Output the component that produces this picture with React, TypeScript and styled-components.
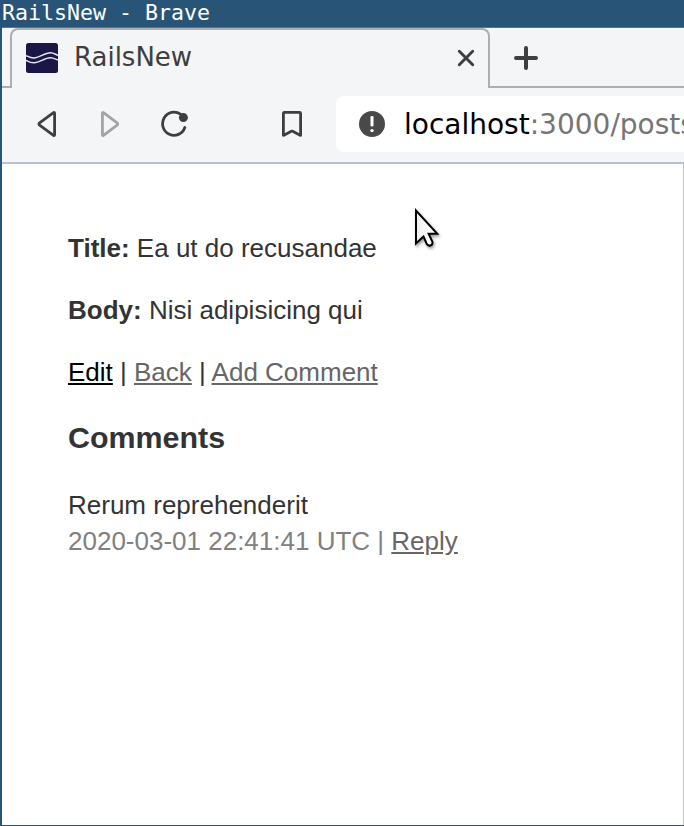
import React from "react";
import styled, { createGlobalStyle } from "styled-components";

const GlobalStyle = createGlobalStyle`
  *, *::before, *::after { box-sizing: border-box; }
  body { margin: 0; overflow: hidden; background: #fff; }
`;

const Window = styled.div`
  position: relative;
  display: flex;
  flex-direction: column;
  width: 684px;
  height: 826px;
  overflow: hidden;
  background: #fff;
  border-left: 2px solid #285577;
  border-bottom: 1px solid #285577;
`;

const TitleBar = styled.header`
  flex: none;
  height: 28px;
  margin-left: -2px;
  background: #285577;
  border-bottom: 1px solid #4c7899;
  color: #fff;
  font: 21.6px/26px "DejaVu Sans Mono", monospace;
  padding-left: 2px;
  white-space: pre;
`;

const TabStrip = styled.div`
  flex: none;
  display: flex;
  height: 60px;
  background: #f4f5f7;
`;

const StripEdge = styled.div<{ $grow?: boolean }>`
  flex: ${(p) => (p.$grow ? "1" : "0 0 8px")};
  border-bottom: 2px solid #adaeb0;
  display: flex;
  align-items: center;
  padding: ${(p) => (p.$grow ? "2px 0 0 22px" : "0")};
`;

const Tab = styled.div`
  flex: none;
  display: flex;
  align-items: center;
  width: 480px;
  padding: 0 13px 2px 14px;
  border: 2px solid #adaeb0;
  border-bottom: 0;
  border-radius: 8px 8px 0 0;
`;

const TabTitle = styled.span`
  flex: 1;
  margin-left: 16px;
  color: #3e3e3e;
  font: 26px/30px "DejaVu Sans", sans-serif;
  margin-top: -3px;
`;

const Toolbar = styled.nav`
  flex: none;
  display: flex;
  align-items: center;
  height: 76px;
  padding-bottom: 2px;
  background: #f4f5f7;
  border-bottom: 2px solid #bac2ca;
`;

const Tool = styled.span<{ $gap: number }>`
  display: flex;
  flex: none;
  margin-left: ${(p) => p.$gap}px;
`;

const AddressBar = styled.div`
  flex: 1;
  min-width: 0;
  display: flex;
  align-items: center;
  height: 56px;
  margin-left: 34px;
  padding-left: 22px;
  background: #fff;
  border-radius: 8px 0 0 8px;
  overflow: hidden;
`;

const Url = styled.span`
  flex: none;
  margin: 2px 0 0 18px;
  color: #757575;
  font: 28px/34px "DejaVu Sans", sans-serif;
  white-space: nowrap;
`;

const Host = styled.span`
  color: #000;
`;

const Page = styled.main`
  flex: 1;
  padding: 66px;
  border-right: 1px solid #c3c3c3;
  color: #333;
  font: 26px/36px "Liberation Sans", Arial, sans-serif;
`;

const Paragraph = styled.p`
  margin: 0 0 26px;
`;

const Heading = styled.h3`
  margin: 29.42px 0 31.42px;
  font-size: 30.42px;
`;

const Meta = styled.div`
  color: #808080;
`;

const Link = styled.a<{ $active?: boolean }>`
  color: ${(p) => (p.$active ? "#000" : "#666")};
  text-decoration: underline;
`;

const Pointer = styled.svg`
  position: absolute;
  left: 408px;
  top: 202px;
  filter: drop-shadow(1px 2px 1.5px rgba(0, 0, 0, 0.4));
`;

const InfoBadge = styled.svg`
  flex: none;
`;

const Favicon = () => (
  <svg width="32" height="30" viewBox="0 0 32 30">
    <rect width="32" height="30" rx="2.5" fill="#1b1648" />
    <g fill="none" stroke="#e4e5ee" strokeWidth="1.5">
      <path d="M0 12.600C3 14 5 15.300 8.500 15C14 14.400 19 9.700 24.500 9.800C28 9.900 29.500 11.500 32 12.200" />
      <path d="M0 17.300C3 18.900 5 20.100 8.500 19.800C14 19.200 19 14.700 24.500 14.800C28 14.900 29.500 16.300 32 17" />
    </g>
  </svg>
);

const CloseIcon = () => (
  <svg width="18" height="18" viewBox="0 0 18 18" stroke="#3e3e3e" strokeWidth="2.9" strokeLinecap="round">
    <path d="M2.300 2.300L15.700 15.700M15.700 2.300L2.300 15.700" />
  </svg>
);

const PlusIcon = () => (
  <svg width="28" height="28" viewBox="0 0 28 28" stroke="#3e3e3e" strokeWidth="4" strokeLinecap="round">
    <path d="M14 4V24M4 14H24" />
  </svg>
);

const Triangle = ({ forward = false }: { forward?: boolean }) => (
  <svg width="20" height="28" viewBox="0 0 20 28" fill="none" stroke={forward ? "#a3a4a5" : "#3e3e3e"} strokeWidth="2.8" strokeLinejoin="round">
    <path d={forward ? "M2.400 3.200Q2.400 1.900 3.500 2.700L17.100 12.900Q18.400 14 17.100 15.100L3.500 25.300Q2.400 26.100 2.400 24.800Z" : "M18.600 3.200Q18.600 1.900 17.500 2.700L3.600 12.900Q2.300 14 3.600 15.100L17.500 25.300Q18.600 26.100 18.600 24.800Z"} />
  </svg>
);

const ReloadIcon = () => (
  <svg width="28" height="28" viewBox="0 0 28 28">
    <path d="M20.500 4.200A11.400 11.600 0 1 0 24.800 17.500" fill="none" stroke="#3e3e3e" strokeWidth="2.800" strokeLinecap="round" />
    <circle cx="23.400" cy="7.600" r="4.500" fill="#3e3e3e" />
  </svg>
);

const BookmarkIcon = () => (
  <svg width="20" height="28" viewBox="0 0 20 28" fill="none" stroke="#3e3e3e" strokeWidth="2.800" strokeLinejoin="round">
    <path d="M1.400 3.400Q1.400 2.400 2.400 2.400H17.600Q18.600 2.400 18.600 3.400V25.400L10.700 21.200Q10 20.900 9.300 21.200L1.400 25.400Z" />
  </svg>
);

const InfoIcon = () => (
  <InfoBadge width="28" height="28" viewBox="0 0 28 28">
    <circle cx="14" cy="14" r="13" fill="#494949" />
    <rect x="12.500" y="6" width="3" height="10.600" rx="1.300" fill="#fff" />
    <circle cx="14" cy="20.600" r="1.700" fill="#fff" />
  </InfoBadge>
);

export default function App() {
  return (
    <Window>
      <GlobalStyle />
      <TitleBar>RailsNew - Brave</TitleBar>
      <TabStrip>
        <StripEdge />
        <Tab>
          <Favicon />
          <TabTitle>RailsNew</TabTitle>
          <CloseIcon />
        </Tab>
        <StripEdge $grow>
          <PlusIcon />
        </StripEdge>
      </TabStrip>
      <Toolbar>
        <Tool $gap={34}><Triangle /></Tool>
        <Tool $gap={44}><Triangle forward /></Tool>
        <Tool $gap={40}><ReloadIcon /></Tool>
        <Tool $gap={94}><BookmarkIcon /></Tool>
        <AddressBar>
          <InfoIcon />
          <Url><Host>localhost</Host>:3000/posts</Url>
        </AddressBar>
      </Toolbar>
      <Page>
        <Paragraph><strong>Title:</strong> Ea ut do recusandae</Paragraph>
        <Paragraph><strong>Body:</strong> Nisi adipisicing qui</Paragraph>
        <Link $active>Edit</Link> | <Link>Back</Link> | <Link>Add Comment</Link>
        <Heading>Comments</Heading>
        <div>Rerum reprehenderit</div>
        <Meta>2020-03-01 22:41:41 UTC | <Link>Reply</Link></Meta>
      </Page>
      <Pointer width="36" height="50" viewBox="0 0 36 50">
        <defs>
          <linearGradient id="pointerFill" x1="0" y1="0" x2="1" y2="0">
            <stop offset="0" stopColor="#ededed" />
            <stop offset="0.600" stopColor="#fff" />
          </linearGradient>
        </defs>
        <path d="M6 8.500V41.500L13.500 34.500L16.800 42C18.800 45.300 23.800 42.800 22.300 39.600L18.600 31.700H27.300Z" fill="url(#pointerFill)" stroke="#000" strokeWidth="2" />
      </Pointer>
    </Window>
  );
}
